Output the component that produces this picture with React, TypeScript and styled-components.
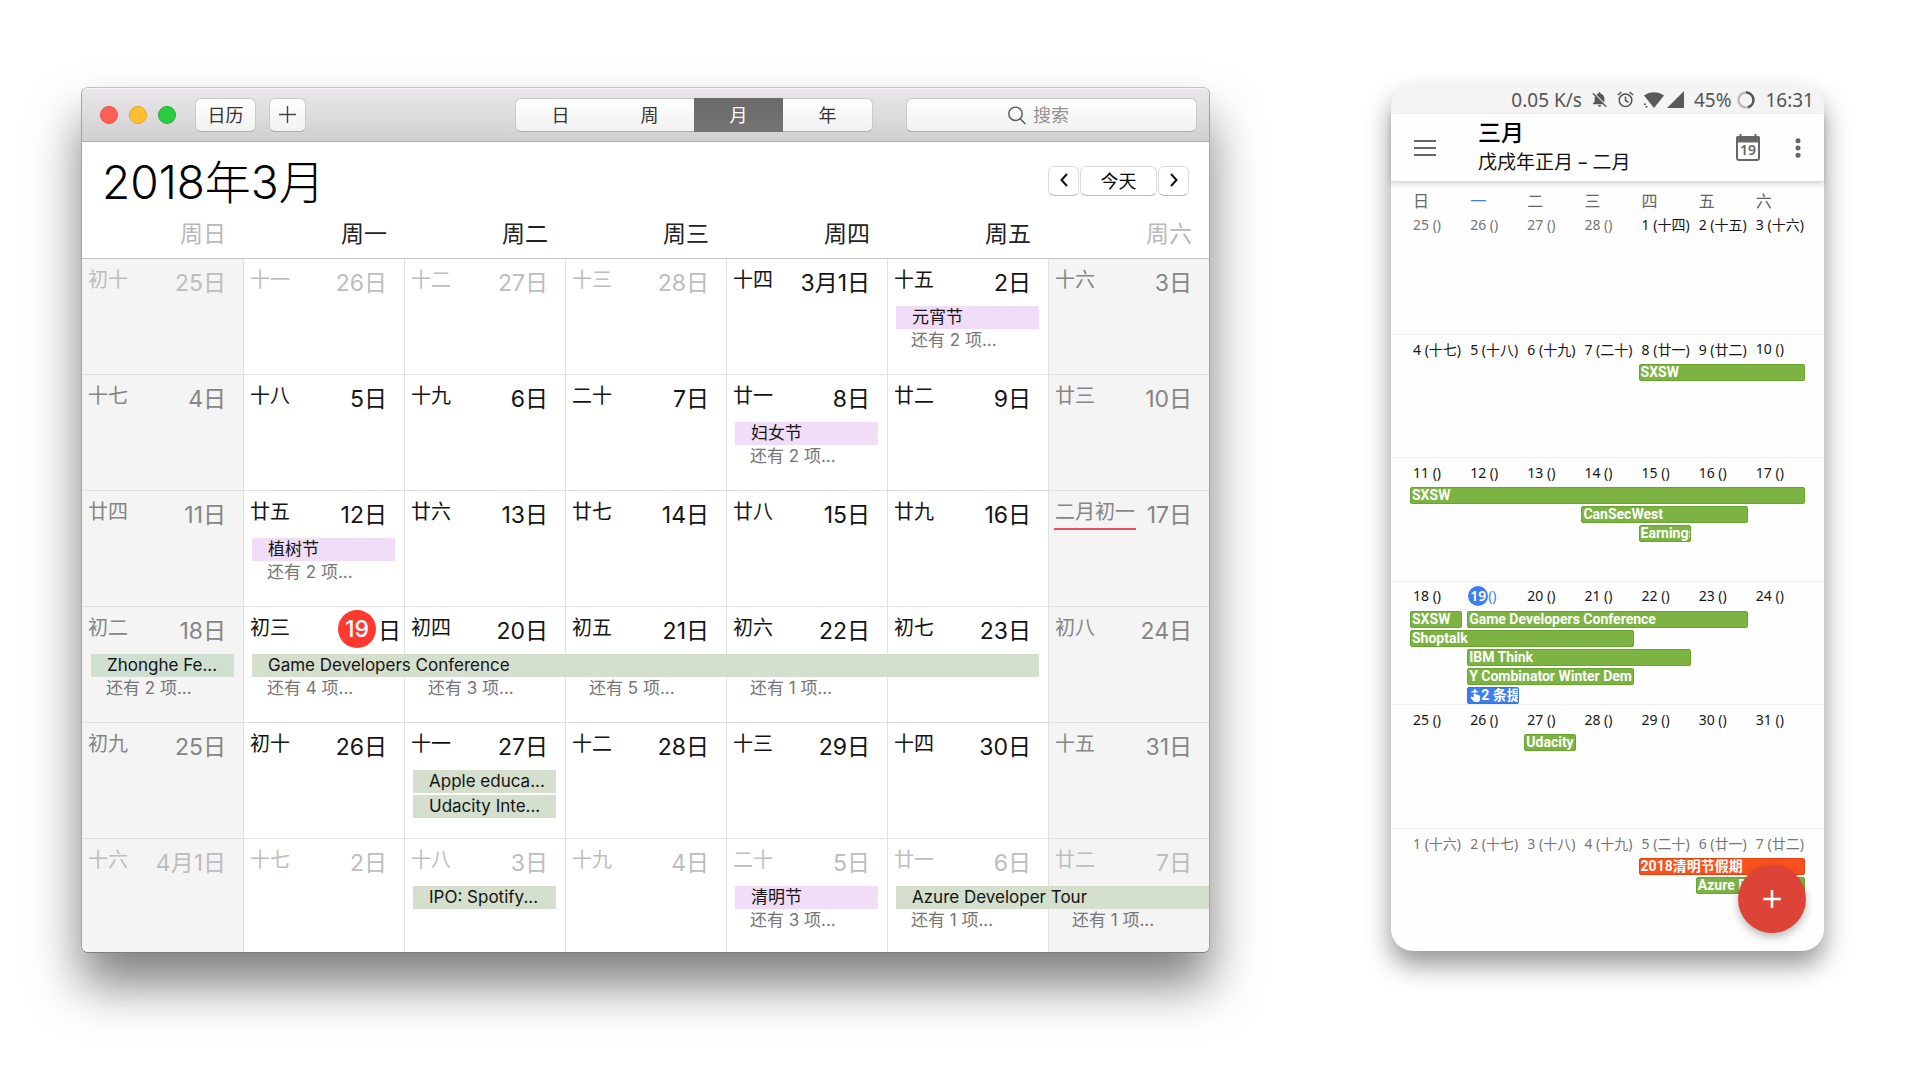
import React, { useState } from "react";
import styled, { createGlobalStyle, css } from "styled-components";

const sans = `Inter, "Noto Sans CJK SC", sans-serif`;
const phoneSans = `"Noto Sans", "Noto Sans CJK SC", sans-serif`;

const GlobalStyle = createGlobalStyle`
  * { box-sizing: border-box; }
  body { margin: 0; background: #fff; }
  button, input { font: inherit; color: inherit; margin: 0; padding: 0; border: 0; background: none; }
  h1, h2, p { margin: 0; font-weight: inherit; }
  svg { flex-shrink: 0; }
`;

const Stage = styled.main`
  min-height: 100vh;
  padding: 85px 96px 85px 81px;
`;

const Pair = styled.div`
  display: flex;
  gap: 181px;
  align-items: stretch;
`;

/* ---------- desktop window ---------- */

const Window = styled.section`
  flex: 1;
  min-width: 0;
  margin-top: 2px;
  border: 1px solid #a3a3a5;
  border-top-color: #c4c2c4;
  border-bottom-color: #7f7f80;
  border-radius: 7px;
  overflow: hidden;
  background: #fff;
  color: #141414;
  font-family: ${sans};
  box-shadow: 0 32px 50px rgba(0, 0, 0, 0.5);
`;

const Toolbar = styled.header`
  display: flex;
  align-items: center;
  height: 54px;
  padding: 0 12px 0 18px;
  background: linear-gradient(#e9e7e9, #d1cfd1);
  border-top: 1px solid #f6f5f6;
  border-bottom: 1px solid #b1afb1;
  font-size: 18px;
`;

const Lights = styled.div`
  display: flex;
  gap: 11px;
  margin-right: 19px;
`;

const Light = styled.button<{ $fill: string; $edge: string }>`
  width: 18px;
  height: 18px;
  border-radius: 50%;
  background: ${(p) => p.$fill};
  border: 1px solid ${(p) => p.$edge};
`;

const raised = css`
  background: linear-gradient(#fefefe, #f2f2f2);
  border: 1px solid #cbc9cb;
  border-bottom-color: #aeacae;
  border-radius: 6px;
`;

const ToolButton = styled.button<{ $width: number }>`
  ${raised}
  display: flex;
  align-items: center;
  justify-content: center;
  width: ${(p) => p.$width}px;
  height: 34px;
  margin-right: 13px;
  padding-bottom: 2px;
  color: #333;
`;

const Segments = styled.div`
  ${raised}
  display: flex;
  height: 34px;
  margin-left: auto;
  margin-right: 33px;
`;

const Segment = styled.button<{ $active: boolean }>`
  width: 89px;
  padding-bottom: 2px;
  color: #333;
  & + & { border-left: 1px solid #cfcdcf; }
  ${(p) =>
    p.$active &&
    css`
      && {
        margin: -1px 0;
        background: linear-gradient(#6a6a6a, #747474);
        border: 0;
        color: #fff;
      }
      & + & { border-left: 0; }
    `}
`;

const Search = styled.label`
  ${raised}
  display: flex;
  align-items: center;
  justify-content: center;
  gap: 7px;
  flex: 0 1 291px;
  height: 34px;
  padding-right: 24px;
  color: #444;
`;

const SearchInput = styled.input`
  width: 38px;
  outline: none;
  &::placeholder { color: #929292; opacity: 1; }
`;

const Heading = styled.div`
  display: flex;
  justify-content: space-between;
  align-items: flex-start;
  height: 68px;
  padding: 10px 20px 0 20px;
`;

const MonthTitle = styled.h1`
  font-size: 46px;
  line-height: 60px;
  font-weight: 300;
  color: #000;
`;

const Pager = styled.div`
  display: flex;
  gap: 1px;
  margin-top: 14px;
  font-size: 18px;
`;

const PagerButton = styled.button<{ $wide?: boolean }>`
  display: flex;
  align-items: center;
  justify-content: center;
  width: ${(p) => (p.$wide ? 77 : 31)}px;
  height: 30px;
  padding-bottom: 3px;
  background: #fff;
  border: 1px solid #dcdcdc;
  border-bottom-color: #bdbdbd;
  border-radius: 6px;
  color: #000;
`;

const WeekdayRow = styled.div`
  display: grid;
  grid-template-columns: repeat(7, 1fr);
  height: 49px;
  border-bottom: 1px solid #c5c5c9;
  font-size: 23px;
  line-height: 48px;
  text-align: right;
`;

const Weekday = styled.span<{ $weekend: boolean }>`
  padding-right: 17px;
  color: ${(p) => (p.$weekend ? "#b9b9b9" : "#222")};
`;

const Week = styled.div`
  display: grid;
  grid-template-columns: repeat(7, 1fr);
  grid-template-rows: 47px 25px 25px 18px;
  border-bottom: 1px solid #dfdfdf;
  overflow: hidden;
  &:last-child {
    grid-template-rows: 47px 25px 25px 16px;
    border-bottom: 0;
  }
`;

type Tone = "strong" | "soft" | "faint";
const tones: Record<Tone, string> = { strong: "#141414", soft: "#858585", faint: "#bdbdbd" };

const DayCell = styled.div<{ $col: number; $tone: Tone; $today: boolean }>`
  grid-column: ${(p) => p.$col};
  grid-row: 1 / -1;
  display: flex;
  justify-content: space-between;
  align-items: flex-start;
  padding: 0 ${(p) => (p.$today ? 3 : 17)}px 0 5px;
  border-left: ${(p) => (p.$col === 1 ? 0 : 1)}px solid #e1e1e1;
  background: ${(p) => (p.$col === 1 || p.$col === 7 ? "#f4f4f4" : "#fff")};
  color: ${(p) => tones[p.$tone]};
`;

const Lunar = styled.span<{ $marked: boolean }>`
  margin-top: 5px;
  padding: 0 1px;
  font-size: 20px;
  line-height: 32px;
  height: 34px;
  white-space: nowrap;
  border-bottom: 2px solid ${(p) => (p.$marked ? "#e8505b" : "transparent")};
`;

const DateNumber = styled.span`
  display: flex;
  align-items: center;
  height: 43px;
  font-size: 23px;
  white-space: nowrap;
`;

const TodayDot = styled.span`
  display: flex;
  align-items: center;
  justify-content: center;
  width: 38px;
  height: 38px;
  margin-right: 2px;
  border-radius: 50%;
  background: #ff3830;
  color: #fff;
  font-weight: 500;
`;

const EventBar = styled.div<{ $col: number; $span: number; $row: number; $color: string; $open: boolean }>`
  grid-column: ${(p) => p.$col} / span ${(p) => p.$span};
  grid-row: ${(p) => p.$row + 1};
  height: 23px;
  margin: 0 ${(p) => (p.$open ? 0 : 9)}px 0 9px;
  padding-left: 16px;
  background: ${(p) => p.$color};
  color: #141414;
  font-size: 17px;
  line-height: 23px;
  white-space: nowrap;
`;

const More = styled.div<{ $col: number }>`
  grid-column: ${(p) => p.$col};
  grid-row: 3;
  padding-left: 24px;
  color: #767676;
  font-size: 17px;
  line-height: 19px;
  white-space: nowrap;
`;

const PURPLE = "#f1ddf7";
const GREEN = "#d4dfcd";

interface MacWeek {
  days: [string, string, Tone][];
  events?: { col: number; span?: number; row?: number; title: string; color: string; open?: boolean }[];
  more?: [number, number][];
}

const weeks: MacWeek[] = [
  {
    days: [["初十", "25日", "faint"], ["十一", "26日", "faint"], ["十二", "27日", "faint"], ["十三", "28日", "faint"], ["十四", "3月1日", "strong"], ["十五", "2日", "strong"], ["十六", "3日", "soft"]],
    events: [{ col: 6, title: "元宵节", color: PURPLE }],
    more: [[6, 2]],
  },
  {
    days: [["十七", "4日", "soft"], ["十八", "5日", "strong"], ["十九", "6日", "strong"], ["二十", "7日", "strong"], ["廿一", "8日", "strong"], ["廿二", "9日", "strong"], ["廿三", "10日", "soft"]],
    events: [{ col: 5, title: "妇女节", color: PURPLE }],
    more: [[5, 2]],
  },
  {
    days: [["廿四", "11日", "soft"], ["廿五", "12日", "strong"], ["廿六", "13日", "strong"], ["廿七", "14日", "strong"], ["廿八", "15日", "strong"], ["廿九", "16日", "strong"], ["二月初一", "17日", "soft"]],
    events: [{ col: 2, title: "植树节", color: PURPLE }],
    more: [[2, 2]],
  },
  {
    days: [["初二", "18日", "soft"], ["初三", "19日", "strong"], ["初四", "20日", "strong"], ["初五", "21日", "strong"], ["初六", "22日", "strong"], ["初七", "23日", "strong"], ["初八", "24日", "soft"]],
    events: [
      { col: 1, title: "Zhonghe Fe...", color: "#cfdfd0" },
      { col: 2, span: 5, title: "Game Developers Conference", color: GREEN },
    ],
    more: [[1, 2], [2, 4], [3, 3], [4, 5], [5, 1]],
  },
  {
    days: [["初九", "25日", "soft"], ["初十", "26日", "strong"], ["十一", "27日", "strong"], ["十二", "28日", "strong"], ["十三", "29日", "strong"], ["十四", "30日", "strong"], ["十五", "31日", "soft"]],
    events: [
      { col: 3, title: "Apple educa...", color: GREEN },
      { col: 3, row: 2, title: "Udacity Inte...", color: GREEN },
    ],
  },
  {
    days: [["十六", "4月1日", "faint"], ["十七", "2日", "faint"], ["十八", "3日", "faint"], ["十九", "4日", "faint"], ["二十", "5日", "faint"], ["廿一", "6日", "faint"], ["廿二", "7日", "faint"]],
    events: [
      { col: 3, title: "IPO: Spotify...", color: GREEN },
      { col: 5, title: "清明节", color: PURPLE },
      { col: 6, span: 2, title: "Azure Developer Tour", color: GREEN, open: true },
    ],
    more: [[5, 3], [6, 1], [7, 1]],
  },
];

const Chevron = ({ d }: { d: string }) => (
  <svg width="10" height="14" viewBox="0 0 10 14" fill="none" stroke="#111" strokeWidth="2">
    <path d={d} />
  </svg>
);

function DesktopCalendar() {
  const [view, setView] = useState("月");
  return (
    <Window>
      <Toolbar>
        <Lights>
          <Light $fill="#ff6058" $edge="#e8503f" aria-label="关闭" />
          <Light $fill="#ffbf30" $edge="#e3a52a" aria-label="最小化" />
          <Light $fill="#29cc42" $edge="#1eae30" aria-label="全屏" />
        </Lights>
        <ToolButton $width={61}>日历</ToolButton>
        <ToolButton $width={37} aria-label="新建日程">
          <svg width="17" height="17" viewBox="0 0 17 17" stroke="#444" strokeWidth="1.4">
            <path d="M8.5 0v17M0 8.5h17" />
          </svg>
        </ToolButton>
        <Segments>
          {["日", "周", "月", "年"].map((v) => (
            <Segment key={v} $active={v === view} onClick={() => setView(v)}>
              {v}
            </Segment>
          ))}
        </Segments>
        <Search>
          <svg width="18" height="19" viewBox="0 0 18 19" fill="none" stroke="#555" strokeWidth="1.4">
            <circle cx="7.5" cy="7.8" r="6.7" />
            <path d="M12.3 12.8l5 5.2" />
          </svg>
          <SearchInput type="text" placeholder="搜索" aria-label="搜索" />
        </Search>
      </Toolbar>
      <Heading>
        <MonthTitle>2018年3月</MonthTitle>
        <Pager>
          <PagerButton aria-label="上个月">
            <Chevron d="M8 1L2.5 7L8 13" />
          </PagerButton>
          <PagerButton $wide>今天</PagerButton>
          <PagerButton aria-label="下个月">
            <Chevron d="M2 1L7.5 7L2 13" />
          </PagerButton>
        </Pager>
      </Heading>
      <WeekdayRow>
        {["周日", "周一", "周二", "周三", "周四", "周五", "周六"].map((d, i) => (
          <Weekday key={d} $weekend={i === 0 || i === 6}>
            {d}
          </Weekday>
        ))}
      </WeekdayRow>
      {weeks.map((week, w) => (
        <Week key={w}>
          {week.days.map(([lunar, date, tone], i) => {
            const today = date === "19日";
            return (
              <DayCell key={date} $col={i + 1} $tone={tone} $today={today}>
                <Lunar $marked={lunar === "二月初一"}>{lunar}</Lunar>
                <DateNumber>
                  {today ? (
                    <>
                      <TodayDot>19</TodayDot>日
                    </>
                  ) : (
                    date
                  )}
                </DateNumber>
              </DayCell>
            );
          })}
          {week.events?.map((e) => (
            <EventBar key={e.title} $col={e.col} $span={e.span ?? 1} $row={e.row ?? 1} $color={e.color} $open={!!e.open}>
              {e.title}
            </EventBar>
          ))}
          {week.more?.map(([col, count]) => (
            <More key={col} $col={col}>{`还有 ${count} 项...`}</More>
          ))}
        </Week>
      ))}
    </Window>
  );
}

/* ---------- phone ---------- */

const Phone = styled.section`
  position: relative;
  flex: 0 0 433px;
  display: flex;
  flex-direction: column;
  margin-bottom: 2px;
  border-radius: 22px;
  background: #fefefe;
  color: #111;
  font-family: ${phoneSans};
  box-shadow: 0 14px 26px rgba(0, 0, 0, 0.42);
`;

const StatusBar = styled.div`
  display: flex;
  align-items: center;
  justify-content: flex-end;
  gap: 10px;
  height: 29px;
  padding-right: 10px;
  border-radius: 22px 22px 0 0;
  background: #f4f4f4;
  color: #555;
  font-size: 19px;
`;

const Tight = styled.span<{ $gap: number }>`
  display: flex;
  align-items: center;
  gap: ${(p) => p.$gap}px;
`;

const AppBar = styled.header`
  display: flex;
  align-items: center;
  height: 68px;
  padding: 0 16px 0 22px;
  border-bottom: 1px solid #dedede;
  box-shadow: 0 2px 5px rgba(0, 0, 0, 0.16);
`;

const IconButton = styled.button`
  display: flex;
  align-items: center;
  justify-content: center;
`;

const Titles = styled.div`
  flex: 1;
  margin-left: 41px;
  padding-bottom: 3px;
`;

const PhoneTitle = styled.h2`
  font-size: 23px;
  line-height: 32px;
  font-weight: 500;
  color: #000;
`;

const PhoneSubtitle = styled.p`
  font-size: 19px;
  line-height: 28px;
`;

const Actions = styled.div`
  display: flex;
  align-items: center;
  gap: 28px;
`;

const phoneColumns = css`
  display: grid;
  grid-template-columns: repeat(7, 1fr);
  padding: 0 14px 0 19px;
`;

const PhoneWeekdays = styled.div`
  ${phoneColumns}
  height: 28px;
  padding-top: 6px;
  font-size: 16px;
  line-height: 26px;
`;

const PhoneWeekday = styled.span<{ $today: boolean }>`
  padding-left: 3px;
  color: ${(p) => (p.$today ? "#3c7ef0" : "#666")};
`;

const Month = styled.div`
  flex: 1;
  display: grid;
  grid-template-rows: repeat(6, minmax(0, 1fr));
`;

const PhoneWeek = styled.div`
  ${phoneColumns}
  grid-template-rows: 27px repeat(5, 17px);
  row-gap: 2px;
  & + & { border-top: 1px solid #f0f0f0; }
`;

const PhoneDay = styled.span<{ $muted: boolean; $today: boolean }>`
  display: flex;
  align-items: center;
  grid-row: 1;
  height: 28px;
  padding-left: 3px;
  font-size: 14px;
  white-space: pre;
  color: ${(p) => (p.$today ? "#3c7ef0" : p.$muted ? "#757575" : "#151515")};
`;

const PhoneToday = styled.b`
  display: flex;
  align-items: center;
  justify-content: center;
  width: 20px;
  height: 20px;
  margin-left: -2px;
  border-radius: 50%;
  background: #3c7ef0;
  color: #fff;
  font-weight: 600;
`;

const Chip = styled.div<{ $col: number; $span: number; $row: number; $color: string; $edge: string }>`
  display: flex;
  align-items: center;
  grid-column: ${(p) => p.$col} / span ${(p) => p.$span};
  grid-row: ${(p) => p.$row + 1};
  margin-right: 5px;
  padding-left: 1px;
  border: 1px solid ${(p) => p.$edge};
  border-radius: 2px;
  background: ${(p) => p.$color};
  color: #fff;
  font: 700 14px/17px Roboto, "Noto Sans CJK SC", sans-serif;
  white-space: nowrap;
  overflow: hidden;
`;

const AddButton = styled.button`
  position: absolute;
  right: 18px;
  bottom: 18px;
  display: flex;
  align-items: center;
  justify-content: center;
  width: 68px;
  height: 68px;
  border-radius: 50%;
  background: #db4437;
  box-shadow: 0 4px 8px rgba(0, 0, 0, 0.28);
`;

const chipColors = {
  green: ["#7cb342", "#69a42c"],
  blue: ["#3c7ef0", "#3474e4"],
  orange: ["#f8511d", "#e5440f"],
};

interface PhoneWeekData {
  days: string[];
  muted?: number[];
  chips?: { col: number; span: number; row: number; title: string; color?: keyof typeof chipColors }[];
}

const phoneWeeks: PhoneWeekData[] = [
  { days: ["25 ()", "26 ()", "27 ()", "28 ()", "1 (十四)", "2 (十五)", "3 (十六)"], muted: [0, 1, 2, 3] },
  {
    days: ["4 (十七)", "5 (十八)", "6 (十九)", "7 (二十)", "8 (廿一)", "9 (廿二)", "10 ()"],
    chips: [{ col: 5, span: 3, row: 1, title: "SXSW" }],
  },
  {
    days: ["11 ()", "12 ()", "13 ()", "14 ()", "15 ()", "16 ()", "17 ()"],
    chips: [
      { col: 1, span: 7, row: 1, title: "SXSW" },
      { col: 4, span: 3, row: 2, title: "CanSecWest" },
      { col: 5, span: 1, row: 3, title: "Earnings" },
    ],
  },
  {
    days: ["18 ()", "19", "20 ()", "21 ()", "22 ()", "23 ()", "24 ()"],
    chips: [
      { col: 1, span: 1, row: 1, title: "SXSW" },
      { col: 2, span: 5, row: 1, title: "Game Developers Conference" },
      { col: 1, span: 4, row: 2, title: "Shoptalk" },
      { col: 2, span: 4, row: 3, title: "IBM Think" },
      { col: 2, span: 3, row: 4, title: "Y Combinator Winter Dem" },
      { col: 2, span: 1, row: 5, title: "2 条提", color: "blue" },
    ],
  },
  {
    days: ["25 ()", "26 ()", "27 ()", "28 ()", "29 ()", "30 ()", "31 ()"],
    chips: [{ col: 3, span: 1, row: 1, title: "Udacity" }],
  },
  {
    days: ["1 (十六)", "2 (十七)", "3 (十八)", "4 (十九)", "5 (二十)", "6 (廿一)", "7 (廿二)"],
    muted: [0, 1, 2, 3, 4, 5, 6],
    chips: [
      { col: 5, span: 3, row: 1, title: "2018清明节假期", color: "orange" },
      { col: 6, span: 2, row: 2, title: "Azure Developer Tour" },
    ],
  },
];

const BellOff = () => (
  <svg width="15" height="17" viewBox="0 0 15 17" fill="#555">
    <path d="M7.5 1a1 1 0 0 1 1 1v.7c2.4.5 3.9 2.4 3.9 4.9v3.9L4.2 3.6A5 5 0 0 1 6.5 2.7V2a1 1 0 0 1 1-1zM2.9 5.4L11.6 13.2H.9v-.8l1.7-1.7V7.6c0-.8.1-1.5.3-2.200zM6 14.1h3.2a1.6 1.6 0 0 1-3.2 0z" />
    <path d="M.8 2.3L14.3 15.7" stroke="#555" strokeWidth="1.3" />
  </svg>
);

const Alarm = () => (
  <svg width="17" height="17" viewBox="0 0 17 17" fill="none" stroke="#555" strokeWidth="1.5">
    <circle cx="8.5" cy="9.3" r="6.3" />
    <path d="M8.5 5.5v4l3 1.9M.8 4L4.4 1M16.2 4l-3.6-3" />
  </svg>
);

const Wifi = () => (
  <svg width="20" height="16" viewBox="0 0 20 16" fill="#5a5a5a">
    <path d="M0 3.5C5.5-1 14.5-1 20 3.5L10 16z" />
    <path d="M0 11.5h2v1.5H0zM1.5 14h2v1.5h-2z" />
  </svg>
);

const Signal = () => (
  <svg width="17" height="17" viewBox="0 0 17 17" fill="#5a5a5a">
    <path d="M17 0v17H0z" />
  </svg>
);

const Battery = () => (
  <svg width="18" height="18" viewBox="0 0 18 18" fill="none" strokeWidth="2.5">
    <circle cx="9" cy="9" r="7.5" stroke="#bbb" />
    <path d="M9 1.5a7.5 7.5 0 0 1 2 14.7" stroke="#555" />
  </svg>
);

const Reminder = () => (
  <svg width="12" height="13" viewBox="0 0 12 13" fill="#fff">
    <path d="M4.6 1.5a1.3 1.3 0 0 1 2.6 0v4l3 .7c.7.2 1.1.8 1 1.5l-.5 3.8c-.1.8-.8 1.500-1.6 1.500H6.300c-.5 0-1-.2-1.300-.6L1.400 8.700l.6-.6c.3-.3.7-.3 1-.2l1.600.6z" />
    <path d="M2.5 2.6h6.5" stroke="#fff" strokeWidth="1.2" />
    <path d="M4.3 4.2h3.5" stroke="#3c7ef0" strokeWidth="1" />
  </svg>
);

function PhoneCalendar() {
  return (
    <Phone>
      <StatusBar>
        <span>0.05 K/s</span>
        <BellOff />
        <Alarm />
        <Tight $gap={3}>
          <Wifi />
          <Signal />
        </Tight>
        <Tight $gap={6}>
          <span>45%</span>
          <Battery />
        </Tight>
        <span>16:31</span>
      </StatusBar>
      <AppBar>
        <IconButton aria-label="菜单">
          <svg width="24" height="18" viewBox="0 0 24 18" stroke="#666" strokeWidth="2">
            <path d="M1 2h22M1 9h22M1 16h22" />
          </svg>
        </IconButton>
        <Titles>
          <PhoneTitle>三月</PhoneTitle>
          <PhoneSubtitle>戊戌年正月 – 二月</PhoneSubtitle>
        </Titles>
        <Actions>
          <IconButton aria-label="今天">
            <svg width="24" height="27" viewBox="0 0 24 27" fill="none">
              <rect x="1" y="3" width="22" height="23" rx="2" stroke="#666" strokeWidth="2" />
              <path d="M0 8.5V4a2 2 0 0 1 2-2h20a2 2 0 0 1 2 2v4.5z" fill="#666" />
              <path d="M4.5 0v3M19.5 0v3" stroke="#666" strokeWidth="2" />
              <text x="12" y="21" textAnchor="middle" fontFamily="Noto Sans" fontSize="14" fontWeight="600" fill="#666">
                19
              </text>
            </svg>
          </IconButton>
          <IconButton aria-label="更多">
            <svg width="20" height="20" viewBox="0 0 20 20" fill="#666">
              <circle cx="10" cy="2.7" r="2.5" />
              <circle cx="10" cy="10" r="2.5" />
              <circle cx="10" cy="17.3" r="2.5" />
            </svg>
          </IconButton>
        </Actions>
      </AppBar>
      <PhoneWeekdays>
        {["日", "一", "二", "三", "四", "五", "六"].map((d) => (
          <PhoneWeekday key={d} $today={d === "一"}>
            {d}
          </PhoneWeekday>
        ))}
      </PhoneWeekdays>
      <Month>
        {phoneWeeks.map((week, w) => (
          <PhoneWeek key={w}>
            {week.days.map((day, i) => (
              <PhoneDay key={day} $muted={!!week.muted?.includes(i)} $today={day === "19"}>
                {day === "19" ? (
                  <>
                    <PhoneToday>19</PhoneToday>()
                  </>
                ) : (
                  day
                )}
              </PhoneDay>
            ))}
            {week.chips?.map((c) => {
              const [fill, edge] = chipColors[c.color ?? "green"];
              return (
                <Chip key={c.title} $col={c.col} $span={c.span} $row={c.row} $color={fill} $edge={edge}>
                  {c.color === "blue" && <Reminder />}
                  {c.title}
                </Chip>
              );
            })}
          </PhoneWeek>
        ))}
      </Month>
      <AddButton aria-label="新建活动">
        <svg width="18" height="18" viewBox="0 0 18 18" stroke="#fff" strokeWidth="2.5">
          <path d="M9 0v18M0 9h18" />
        </svg>
      </AddButton>
    </Phone>
  );
}

export default function App() {
  return (
    <>
      <GlobalStyle />
      <Stage>
        <Pair>
          <DesktopCalendar />
          <PhoneCalendar />
        </Pair>
      </Stage>
    </>
  );
}
